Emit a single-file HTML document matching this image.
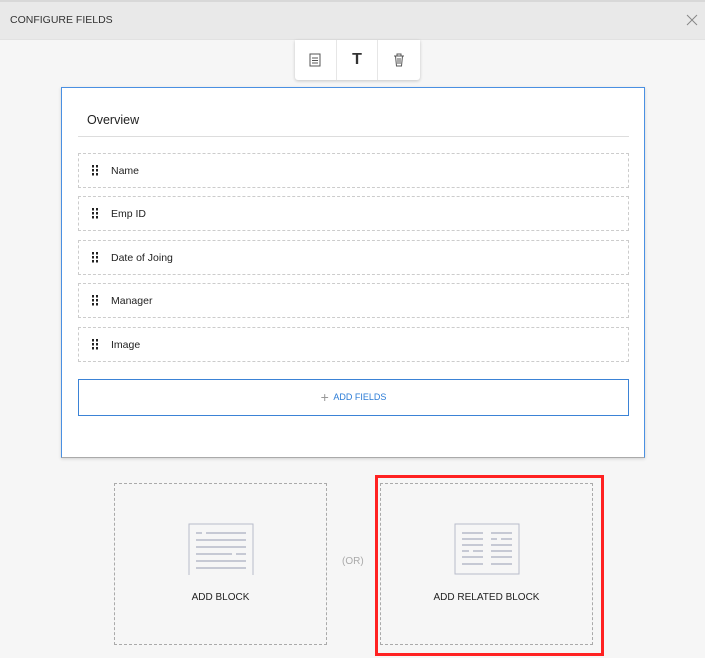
<!DOCTYPE html>
<html><head><style>
*{box-sizing:border-box;margin:0;padding:0}
body{width:705px;height:658px;background:#f6f6f6;font-family:"Liberation Sans",sans-serif;position:relative;overflow:hidden}
.hdr{position:absolute;left:0;top:0;width:705px;height:40px;background:#e9e9e9;border-top:2px solid #d8d8d8;border-bottom:1px solid #e2e2e2}
.hdr span{position:absolute;left:10px;top:12px;font-size:10.5px;color:#333}
.x{position:absolute;right:7px;top:12px}
.tb{position:absolute;left:295px;top:40px;width:125px;height:40px;background:#fff;border-radius:0 0 3px 3px;box-shadow:0 1px 3px rgba(0,0,0,.2);display:flex}
.tb div{width:42px;height:40px;border-right:1px solid #e6e6e6;display:flex;align-items:center;justify-content:center}
.tb div:last-child{border-right:none}
.card{position:absolute;left:61px;top:87px;width:584px;height:371px;background:#fff;border:1px solid #4a90e2;border-bottom-color:#aaa;box-shadow:0 1px 3px rgba(0,0,0,.15)}
.ov{position:absolute;left:25px;top:25px;font-size:12.5px;color:#222}
.ln{position:absolute;left:16px;top:48px;width:551px;height:1px;background:#ddd}
.row{position:absolute;left:16px;width:551px;height:35px;border:1px dashed #ccc;font-size:10.5px;color:#222}
.row i{position:absolute;left:13px;top:11px;width:6px;height:11px;background:linear-gradient(90deg,#222 2px,transparent 2px,transparent 4px,#222 4px,#222 6px,transparent 6px),transparent;-webkit-mask:repeating-linear-gradient(180deg,#000 0 2.5px,transparent 2.5px 4px)}
.row span{position:absolute;left:32px;top:11px}
.add{position:absolute;left:16px;top:291px;width:551px;height:37px;border:1px solid #3b83d6;color:#2a7bd6;font-size:9px;text-align:center;line-height:35px}
.blk{position:absolute;top:483px;width:213px;height:162px;border:1px dashed #aaa}
.blk span{position:absolute;left:0;width:100%;top:108px;text-align:center;font-size:10px;color:#222}
.blk svg{position:absolute;left:73px;top:39px}
.red{position:absolute;left:375px;top:475px;width:229px;height:181px;border:3px solid #f22}
.or{position:absolute;left:342px;top:556px;font-size:10px;color:#aaa}
</style></head><body>
<div class="hdr"><span>CONFIGURE FIELDS</span>
<svg class="x" width="12" height="12" viewBox="0 0 12 12"><path d="M1 1L11 11M11 1L1 11" stroke="#888" stroke-width="1"/></svg></div>
<div class="tb">
<div><svg width="12" height="14" viewBox="0 0 12 14"><rect x="1" y="1" width="10" height="12" fill="none" stroke="#555"/><path d="M3 5h6M3 7.5h6M3 10h6" stroke="#555"/></svg></div>
<div><span style="font-weight:bold;font-size:16px;color:#333">T</span></div>
<div><svg width="12" height="14" viewBox="0 0 12 14"><path d="M1 3h10M4 3V1h4v2M2.5 3l1 10h5l1-10M5 5v6M7 5v6" fill="none" stroke="#555"/></svg></div>
</div>
<div class="card">
<div class="ov">Overview</div><div class="ln"></div>
<div class="row" style="top:65px"><i></i><span>Name</span></div>
<div class="row" style="top:108px"><i></i><span>Emp ID</span></div>
<div class="row" style="top:152px"><i></i><span>Date of Joing</span></div>
<div class="row" style="top:195px"><i></i><span>Manager</span></div>
<div class="row" style="top:239px"><i></i><span>Image</span></div>
<div class="add"><span style="font-size:14px;color:#999;vertical-align:middle">+</span>&nbsp; ADD FIELDS</div>
</div>
<div class="blk" style="left:114px"><svg width="66" height="52" viewBox="0 0 66 52"><path d="M1 52V1h64v51" fill="none" stroke="#b8bccb"/><g stroke="#a9aec0" stroke-width="1.2"><path d="M8 10h6M18 10h40M8 17h50M8 24h50M8 31h36M48 31h10M8 38h50M8 45h50"/></g></svg><span>ADD BLOCK</span></div>
<div class="or">(OR)</div>
<div class="blk" style="left:380px"><svg width="66" height="52" viewBox="0 0 66 52"><rect x="1" y="1" width="64" height="50" fill="none" stroke="#b8bccb"/><g stroke="#a9aec0" stroke-width="1.2"><path d="M8 10h21M8 16h21M8 22h21M8 28h7M19 28h10M8 34h21M8 41h21M37 10h21M37 16h6M47 16h11M37 22h21M37 28h21M37 34h21M37 41h21"/></g></svg><span>ADD RELATED BLOCK</span></div>
<div class="red"></div>
</body></html>
